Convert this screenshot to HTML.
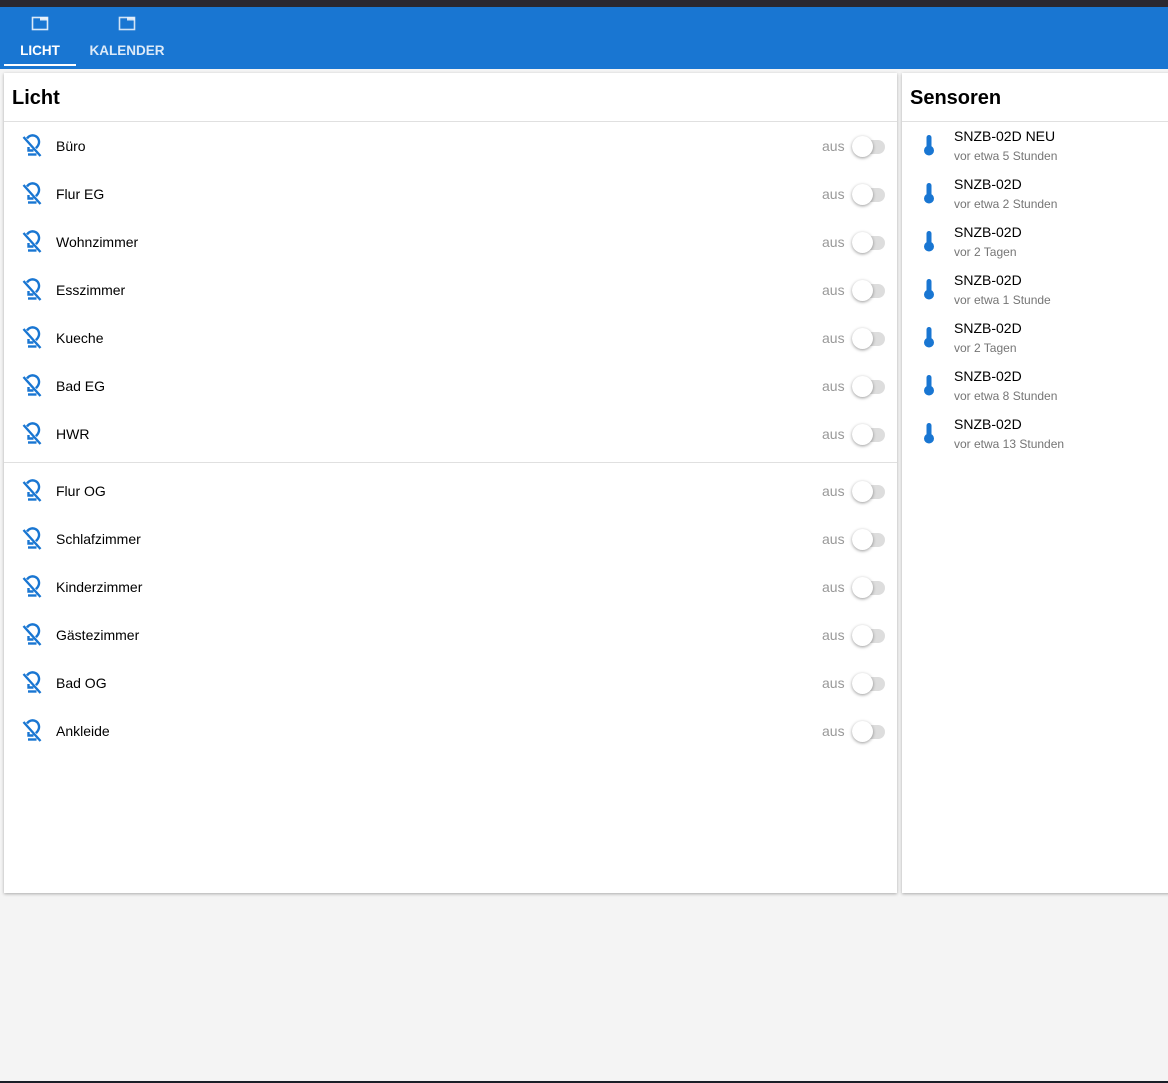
<!DOCTYPE html>
<html><head><meta charset="utf-8"><style>
*{margin:0;padding:0;box-sizing:border-box}
body{width:1168px;height:1083px;background:#f4f4f4;font-family:"Liberation Sans",sans-serif;position:relative;overflow:hidden}
.top{position:absolute;left:0;top:0;width:1168px;height:7px;background:#2a2830}
.bar{position:absolute;left:0;top:7px;width:1168px;height:62px;background:#1976d2}
.tab{position:absolute;top:7px;height:62px;color:#fff;font-size:13.5px;font-weight:bold;text-align:center}
.tab svg{position:absolute;top:9px}
.tab span{position:absolute;top:36px;left:0;right:0}
.card{position:absolute;background:#fff;box-shadow:0 1px 3px rgba(0,0,0,.3)}
.h{position:absolute;left:8px;top:14px;font-size:20px;font-weight:bold;color:#000}
.hr{position:absolute;left:0;right:0;height:1px;background:#e0e0e0}
.row{position:absolute;left:0;width:893px;height:48px}
.row svg{position:absolute;left:16px;top:12px}
.row .n{position:absolute;left:52px;top:16px;font-size:14px;color:#000}
.row .a{position:absolute;left:818px;top:16px;font-size:14px;color:#999}
.tr{position:absolute;left:848px;top:18px;width:33px;height:14px;border-radius:7px;background:#ddd}
.kn{position:absolute;left:848px;top:14px;width:21px;height:21px;border-radius:50%;background:#fff;box-shadow:0 1px 3px rgba(0,0,0,.4)}
.s{position:absolute;left:0;width:270px;height:48px}
.s svg{position:absolute;left:18px;top:12px}
.s .t{position:absolute;left:52px;top:6px;font-size:14px;color:#000}
.s .d{position:absolute;left:52px;top:27px;font-size:12px;color:#757575}
.bot{position:absolute;left:0;top:1081px;width:1168px;height:2px;background:#1a1f28}
</style></head><body>
<div class="top"></div>
<div class="bar"></div>
<div style="position:absolute;left:4px;top:64px;width:72px;height:2px;background:#fff"></div>
<div class="tab" style="left:4px;width:72px"><svg style="left:27px" width="18" height="16" viewBox="0 0 18 16"><rect x="1.5" y="1.5" width="15" height="12" fill="none" stroke="#fff" stroke-width="1.6" opacity=".85"/><rect x="9" y="1.5" width="7.5" height="3" fill="#fff" opacity=".85"/></svg><span>LICHT</span></div>
<div class="tab" style="left:84px;width:86px;color:rgba(255,255,255,.85)"><svg style="left:34px" width="18" height="16" viewBox="0 0 18 16"><rect x="1.5" y="1.5" width="15" height="12" fill="none" stroke="#fff" stroke-width="1.6" opacity=".8"/><rect x="9" y="1.5" width="7.5" height="3" fill="#fff" opacity=".8"/></svg><span>KALENDER</span></div>

<div class="card" style="left:4px;top:73px;width:893px;height:820px">
<div class="h">Licht</div>
<div class="hr" style="top:48px"></div>
<div class="hr" style="top:389px"></div>
<div id="rows"></div>
</div>

<div class="card" style="left:902px;top:73px;width:270px;height:820px">
<div class="h">Sensoren</div>
<div class="hr" style="top:48px"></div>
<div id="sens"></div>
</div>
<div class="bot"></div>
<script>
var names=["Büro","Flur EG","Wohnzimmer","Esszimmer","Kueche","Bad EG","HWR","Flur OG","Schlafzimmer","Kinderzimmer","Gästezimmer","Bad OG","Ankleide"];
var ic='<svg width="24" height="24" viewBox="0 0 24 24"><path d="M7 4.5A6.5 6.5 0 0 1 18.5 10.5c-.5 1.6-1.8 2.8-2.6 3.7" fill="none" stroke="#1976d2" stroke-width="2.4"/><path d="M8.5 13v3.5h5" fill="none" stroke="#1976d2" stroke-width="2.4"/><path d="M8 20.5h8.5" stroke="#1976d2" stroke-width="2.4"/><path d="M3.5 3l17 19" stroke="#1976d2" stroke-width="2.4"/></svg>';
var h="";
names.forEach(function(n,i){var top=49+i*48+(i>=7?9:0);
h+='<div class="row" style="top:'+top+'px">'+ic+'<div class="n">'+n+'</div><div class="a">aus</div><div class="tr"></div><div class="kn"></div></div>';});
document.getElementById("rows").innerHTML=h;
var s=[["SNZB-02D NEU","vor etwa 5 Stunden"],["SNZB-02D","vor etwa 2 Stunden"],["SNZB-02D","vor 2 Tagen"],["SNZB-02D","vor etwa 1 Stunde"],["SNZB-02D","vor 2 Tagen"],["SNZB-02D","vor etwa 8 Stunden"],["SNZB-02D","vor etwa 13 Stunden"]];
var th='<svg width="18" height="24" viewBox="0 0 18 24"><rect x="6.5" y="1" width="5" height="14" rx="2.5" fill="#1976d2"/><circle cx="9" cy="16.5" r="5" fill="#1976d2"/></svg>';
h="";s.forEach(function(x,i){h+='<div class="s" style="top:'+(49+i*48)+'px">'+th+'<div class="t">'+x[0]+'</div><div class="d">'+x[1]+'</div></div>';});
document.getElementById("sens").innerHTML=h;
</script>
</body></html>
